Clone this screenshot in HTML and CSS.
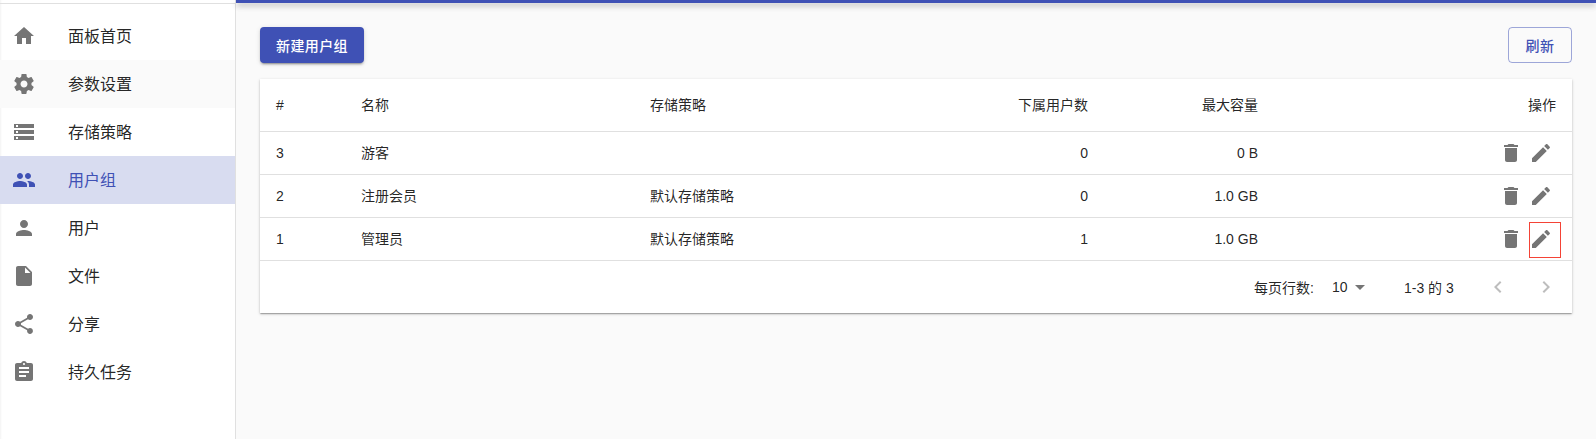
FILE: index.html
```html
<!DOCTYPE html>
<html lang="zh-CN">
<head>
<meta charset="utf-8">
<title>用户组</title>
<link rel="stylesheet" href="styles.css">
</head>
<body>
<aside class="sidebar">
  <div class="sidebar-head"></div>
  <nav class="nav">
    <a class="nav-item"><svg class="icon" viewBox="0 0 24 24"><path d="M10 20v-6h4v6h5v-8h3L12 3 2 12h3v8z"/></svg><span>面板首页</span></a>
    <a class="nav-item hover"><svg class="icon" viewBox="0 0 24 24"><path d="M19.43 12.98c.04-.32.07-.64.07-.98s-.03-.66-.07-.98l2.11-1.65c.19-.15.24-.42.12-.64l-2-3.46c-.12-.22-.39-.3-.61-.22l-2.49 1c-.52-.4-1.08-.73-1.69-.98l-.38-2.65C14.46 2.18 14.25 2 14 2h-4c-.25 0-.46.18-.49.42l-.38 2.65c-.61.25-1.17.59-1.69.98l-2.49-1c-.23-.09-.49 0-.61.22l-2 3.46c-.13.22-.07.49.12.64l2.11 1.65c-.04.32-.07.65-.07.98s.03.66.07.98l-2.11 1.65c-.19.15-.24.42-.12.64l2 3.46c.12.22.39.3.61.22l2.49-1c.52.4 1.08.73 1.69.98l.38 2.65c.03.24.24.42.49.42h4c.25 0 .46-.18.49-.42l.38-2.65c.61-.25 1.17-.59 1.69-.98l2.49 1c.23.09.49 0 .61-.22l2-3.46c.12-.22.07-.49-.12-.64l-2.11-1.65zM12 15.5c-1.93 0-3.5-1.57-3.5-3.5s1.57-3.5 3.5-3.5 3.5 1.57 3.5 3.5-1.57 3.5-3.5 3.5z"/></svg><span>参数设置</span></a>
    <a class="nav-item"><svg class="icon" viewBox="0 0 24 24"><path d="M2 20h20v-4H2v4zm2-3h2v2H4v-2zM2 4v4h20V4H2zm4 3H4V5h2v2zm-4 7h20v-4H2v4zm2-3h2v2H4v-2z"/></svg><span>存储策略</span></a>
    <a class="nav-item active"><svg class="icon" viewBox="0 0 24 24"><path d="M16 11c1.66 0 2.99-1.34 2.99-3S17.66 5 16 5c-1.66 0-3 1.34-3 3s1.34 3 3 3zm-8 0c1.66 0 2.99-1.34 2.99-3S9.66 5 8 5C6.34 5 5 6.34 5 8s1.34 3 3 3zm0 2c-2.33 0-7 1.17-7 3.5V19h14v-2.5c0-2.33-4.67-3.5-7-3.5zm8 0c-.29 0-.62.02-.97.05 1.16.84 1.97 1.97 1.97 3.45V19h6v-2.5c0-2.33-4.67-3.5-7-3.5z"/></svg><span>用户组</span></a>
    <a class="nav-item"><svg class="icon" viewBox="0 0 24 24"><path d="M12 12c2.21 0 4-1.79 4-4s-1.79-4-4-4-4 1.79-4 4 1.79 4 4 4zm0 2c-2.67 0-8 1.34-8 4v2h16v-2c0-2.66-5.33-4-8-4z"/></svg><span>用户</span></a>
    <a class="nav-item"><svg class="icon" viewBox="0 0 24 24"><path d="M6 2c-1.1 0-1.99.9-1.99 2L4 20c0 1.1.89 2 1.99 2H18c1.1 0 2-.9 2-2V8l-6-6H6zm7 7V3.5L18.5 9H13z"/></svg><span>文件</span></a>
    <a class="nav-item"><svg class="icon" viewBox="0 0 24 24"><path d="M18 16.08c-.76 0-1.44.3-1.96.77L8.91 12.7c.05-.23.09-.46.09-.7s-.04-.47-.09-.7l7.05-4.11c.54.5 1.25.81 2.04.81 1.66 0 3-1.34 3-3s-1.34-3-3-3-3 1.34-3 3c0 .24.04.47.09.7L8.04 9.81C7.5 9.31 6.79 9 6 9c-1.66 0-3 1.34-3 3s1.34 3 3 3c.79 0 1.5-.31 2.04-.81l7.12 4.16c-.05.21-.08.43-.08.65 0 1.61 1.31 2.92 2.92 2.92 1.61 0 2.92-1.31 2.92-2.92s-1.31-2.92-2.92-2.92z"/></svg><span>分享</span></a>
    <a class="nav-item"><svg class="icon" viewBox="0 0 24 24"><path d="M19 3h-4.18C14.4 1.84 13.3 1 12 1c-1.3 0-2.4.84-2.82 2H5c-1.1 0-2 .9-2 2v14c0 1.1.9 2 2 2h14c1.1 0 2-.9 2-2V5c0-1.1-.9-2-2-2zm-7 0c.55 0 1 .45 1 1s-.45 1-1 1-1-.45-1-1 .45-1 1-1zm2 14H7v-2h7v2zm3-4H7v-2h10v2zm0-4H7V7h10v2z"/></svg><span>持久任务</span></a>
  </nav>
</aside>
<div class="content">
  <div class="appbar"></div>
  <main class="main">
    <div class="toolbar">
      <button class="btn btn-primary">新建用户组</button>
      <button class="btn btn-outline">刷新</button>
    </div>
    <section class="paper">
      <table class="table">
        <colgroup>
          <col class="c1"><col class="c2"><col class="c3"><col class="c4"><col class="c5"><col class="c6">
        </colgroup>
        <thead>
          <tr><th>#</th><th>名称</th><th>存储策略</th><th class="num">下属用户数</th><th class="num">最大容量</th><th class="num">操作</th></tr>
        </thead>
        <tbody>
          <tr><td>3</td><td>游客</td><td></td><td class="num">0</td><td class="num">0 B</td>
            <td class="num"><div class="actions">
              <span class="action"><svg class="icon" viewBox="0 0 24 24"><path d="M6 19c0 1.1.9 2 2 2h8c1.1 0 2-.9 2-2V7H6v12zM19 4h-3.5l-1-1h-5l-1 1H5v2h14V4z"/></svg></span>
              <span class="action"><svg class="icon" viewBox="0 0 24 24"><path d="M3 17.25V21h3.75L17.81 9.94l-3.75-3.75L3 17.25zM20.71 7.04c.39-.39.39-1.02 0-1.41l-2.34-2.34c-.39-.39-1.02-.39-1.41 0l-1.83 1.83 3.75 3.75 1.83-1.83z"/></svg></span>
            </div></td></tr>
          <tr><td>2</td><td>注册会员</td><td>默认存储策略</td><td class="num">0</td><td class="num">1.0 GB</td>
            <td class="num"><div class="actions">
              <span class="action"><svg class="icon" viewBox="0 0 24 24"><path d="M6 19c0 1.1.9 2 2 2h8c1.1 0 2-.9 2-2V7H6v12zM19 4h-3.5l-1-1h-5l-1 1H5v2h14V4z"/></svg></span>
              <span class="action"><svg class="icon" viewBox="0 0 24 24"><path d="M3 17.25V21h3.75L17.81 9.94l-3.75-3.75L3 17.25zM20.71 7.04c.39-.39.39-1.02 0-1.41l-2.34-2.34c-.39-.39-1.02-.39-1.41 0l-1.83 1.83 3.75 3.75 1.83-1.83z"/></svg></span>
            </div></td></tr>
          <tr><td>1</td><td>管理员</td><td>默认存储策略</td><td class="num">1</td><td class="num">1.0 GB</td>
            <td class="num"><div class="actions">
              <span class="action"><svg class="icon" viewBox="0 0 24 24"><path d="M6 19c0 1.1.9 2 2 2h8c1.1 0 2-.9 2-2V7H6v12zM19 4h-3.5l-1-1h-5l-1 1H5v2h14V4z"/></svg></span>
              <span class="action"><svg class="icon" viewBox="0 0 24 24"><path d="M3 17.25V21h3.75L17.81 9.94l-3.75-3.75L3 17.25zM20.71 7.04c.39-.39.39-1.02 0-1.41l-2.34-2.34c-.39-.39-1.02-.39-1.41 0l-1.83 1.83 3.75 3.75 1.83-1.83z"/></svg><i class="marker"></i></span>
            </div></td></tr>
        </tbody>
      </table>
      <div class="pager">
        <span class="pager-label">每页行数:</span>
        <span class="pager-select">10<svg class="caret" viewBox="0 0 24 24"><path d="M7 10l5 5 5-5z"/></svg></span>
        <span class="pager-range">1-3 的 3</span>
        <span class="pager-nav">
          <svg class="icon" viewBox="0 0 24 24"><path d="M15.41 7.41L14 6l-6 6 6 6 1.41-1.41L10.83 12z"/></svg>
          <svg class="icon" viewBox="0 0 24 24"><path d="M10 6L8.59 7.41 13.17 12l-4.58 4.59L10 18l6-6z"/></svg>
        </span>
      </div>
    </section>
  </main>
</div>
</body>
</html>
```
FILE: styles.css
```css
* { box-sizing: border-box; }
html, body { height: 100%; }
body {
  margin: 0;
  display: flex;
  overflow: hidden;
  background: #fafafa;
  color: rgba(0, 0, 0, 0.87);
  font-family: "Liberation Sans", "Noto Sans CJK SC", sans-serif;
  font-size: 14px;
}
.icon { display: block; width: 24px; height: 24px; fill: #757575; flex: none; }

.sidebar {
  width: 236px;
  flex: none;
  background: #fff;
  border-right: 1px solid #e0e0e0;
  box-shadow: inset 2px 0 2px -1px rgba(0, 0, 0, 0.05);
}
.sidebar-head { height: 4px; border-bottom: 1px solid #e0e0e0; }
.nav { padding-top: 8px; }
.nav-item { display: flex; align-items: center; height: 48px; padding-left: 12px; font-size: 16px; }
.nav-item span { margin-left: 32px; padding-bottom: 3px; }
.nav-item.hover { background: #fafafa; }
.nav-item.active { background: #d8dcf0; color: #3f51b5; }
.nav-item.active .icon { fill: #3f51b5; }

.content { flex: 1; min-width: 0; }
.appbar {
  height: 3px;
  background: #3f51b5;
  box-shadow: 0 2px 4px -1px rgba(0,0,0,.2), 0 4px 5px 0 rgba(0,0,0,.14), 0 1px 10px 0 rgba(0,0,0,.12);
}
.main { padding: 24px 24px 0; }
.toolbar { display: flex; justify-content: space-between; margin-bottom: 16px; }
.btn {
  height: 36px;
  min-width: 64px;
  padding: 0 16px;
  border-radius: 4px;
  font: 500 14px "Liberation Sans", "Noto Sans CJK SC", sans-serif;
  letter-spacing: 0.4px;
  background: none;
  border: 0;
}
.btn-primary {
  color: #fff;
  background: #3f51b5;
  box-shadow: 0 3px 1px -2px rgba(0,0,0,.2), 0 2px 2px 0 rgba(0,0,0,.14), 0 1px 5px 0 rgba(0,0,0,.12);
}
.btn-outline { color: #3f51b5; border: 1px solid rgba(63, 81, 181, 0.5); }

.paper {
  background: #fff;
  box-shadow: 0 1px 3px 0 rgba(0,0,0,.2), 0 1px 1px 0 rgba(0,0,0,.14), 0 2px 1px -1px rgba(0,0,0,.12);
}
.table { width: 100%; border-collapse: collapse; table-layout: fixed; }
.c1 { width: 85px; }
.c2 { width: 289px; }
.c3 { width: 235px; }
.c4 { width: 235px; }
.c5 { width: 170px; }
.table th, .table td { padding: 0 16px; text-align: left; border-bottom: 1px solid #e0e0e0; line-height: 18px; }
.table th { height: 52px; font-weight: 400; }
.table td { height: 43px; }
.table .num { text-align: right; }
.actions { display: flex; justify-content: flex-end; }
.action { position: relative; display: block; padding: 3px; }
.marker { position: absolute; left: 3px; top: -2px; width: 32px; height: 36px; border: 1px solid #f44336; }

.pager { display: flex; align-items: center; height: 52px; padding-left: 994px; }
.pager-label { width: 60px; }
.pager-select { display: flex; align-items: center; margin-left: 18px; width: 72px; }
.caret { width: 24px; height: 24px; fill: #757575; }
.pager-range { width: 50px; white-space: nowrap; }
.pager-nav { display: flex; gap: 24px; margin-left: 32px; }
.pager-nav .icon { fill: rgba(0, 0, 0, 0.26); }
```
